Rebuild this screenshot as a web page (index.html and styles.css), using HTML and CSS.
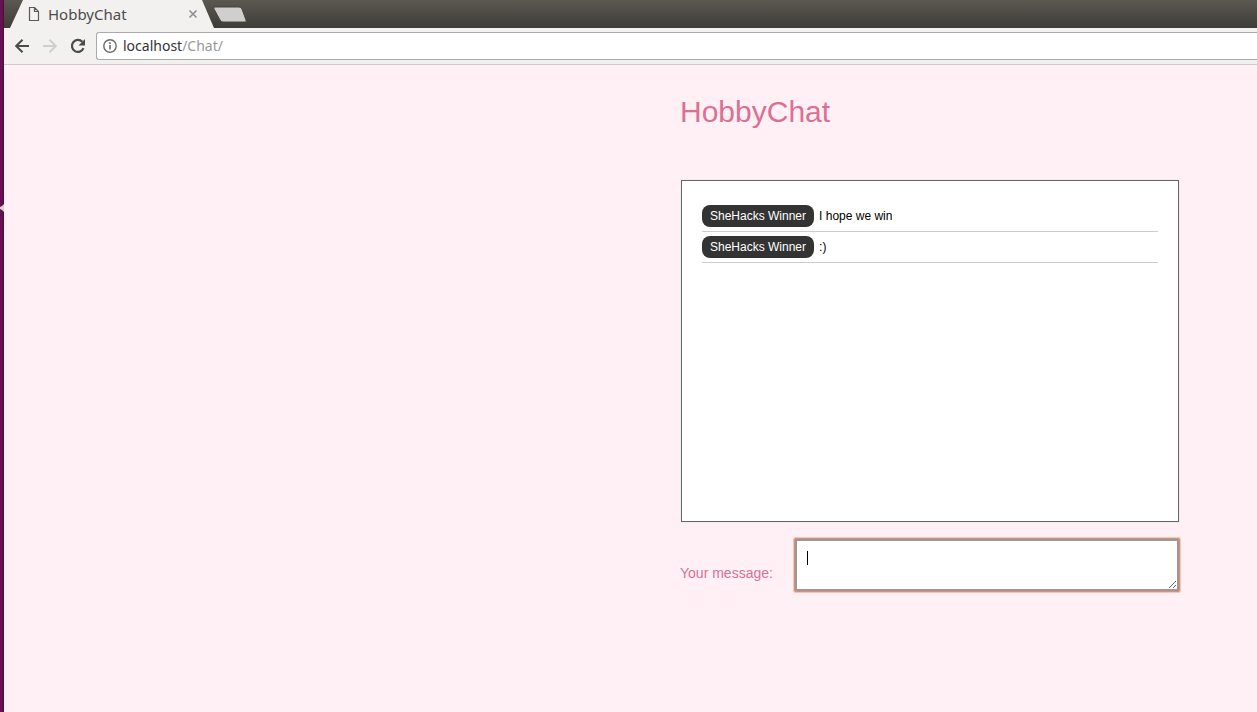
FILE: index.html
```html
<!DOCTYPE html>
<html lang="en">
<head>
<meta charset="utf-8">
<title>HobbyChat</title>
<link rel="stylesheet" href="styles.css">
</head>
<body>
<div class="desktop">
  <div class="launcher-edge">
    <svg class="launcher-arrow" width="4" height="8" viewBox="0 0 4 8" aria-hidden="true"><path d="M4 0v8L2 6 0 5V3l2-1z" fill="#d8d4d2"/></svg>
  </div>
  <div class="browser">
    <header class="tab-strip">
      <svg class="tab-shape" width="205" height="28" viewBox="0 0 205 28" aria-hidden="true"><path d="M0 28L13 0h179l12 28z" fill="#f2f1f0"/></svg>
      <div class="tab">
        <svg width="12" height="14" viewBox="0 0 12 14" aria-hidden="true"><path d="M1.500.5h5l4 4v9h-9zM6.500.5v4h4" fill="none" stroke="#5a5a5a" stroke-width="1.200"/></svg>
        <span class="tab-title">HobbyChat</span>
        <button class="tab-close" type="button" aria-label="Close tab"><svg width="10" height="10" viewBox="0 0 10 10"><path d="M1.500 1.500l7 7M8.500 1.500l-7 7" stroke="#8f8f8f" stroke-width="1.600"/></svg></button>
      </div>
      <button class="new-tab" type="button" aria-label="New tab"><svg width="34" height="17" viewBox="0 0 34 17"><path d="M2 1h24q2 0 3 2l4 11q1 2-1 2H10q-2 0-3-2L1 3q-1-2 1-2z" fill="#d0cfcd" stroke="#45443e"/></svg></button>
    </header>
    <nav class="toolbar" aria-label="Browser">
      <button type="button" aria-label="Back"><svg width="16" height="16" viewBox="0 0 16 16"><path d="M15 8H2.500M8.500 1.700L2.200 8l6.300 6.300" fill="none" stroke="#4b4b4b" stroke-width="2"/></svg></button>
      <button type="button" aria-label="Forward"><svg width="16" height="16" viewBox="0 0 16 16"><path d="M1 8h12.500M7.500 1.700L13.800 8l-6.300 6.300" fill="none" stroke="#cfcecd" stroke-width="2"/></svg></button>
      <button type="button" aria-label="Reload"><svg width="16" height="16" viewBox="0 0 16 16"><path d="M13.500 10.200A6 6 0 1 1 12.300 3.800" fill="none" stroke="#4b4b4b" stroke-width="2.200"/><path d="M15 1v6.500H8.500z" fill="#4b4b4b"/></svg></button>
      <div class="address">
        <svg width="14" height="14" viewBox="0 0 14 14" aria-hidden="true"><circle cx="7" cy="7" r="6.200" fill="none" stroke="#6b6b6b" stroke-width="1.400"/><path d="M7 6v4.500M7 3.300v1.600" stroke="#6b6b6b" stroke-width="1.600"/></svg>
        <span class="url">localhost<span class="url-path">/Chat/</span></span>
      </div>
    </nav>
    <main class="page">
      <div class="chat">
        <h1>HobbyChat</h1>
        <div class="chat-area">
          <p class="message"><span class="sender">SheHacks Winner</span>I hope we win</p>
          <p class="message"><span class="sender">SheHacks Winner</span>:)</p>
        </div>
        <form class="send-form">
          <label for="message">Your message:</label>
          <div class="field">
            <textarea id="message" maxlength="100"></textarea>
            <span class="caret"></span>
          </div>
        </form>
      </div>
    </main>
  </div>
</div>
</body>
</html>
```
FILE: styles.css
```css
* { box-sizing: border-box; }
body { margin: 0; font-family: "Liberation Sans", Arial, sans-serif; }
button { border: 0; padding: 0; background: none; display: flex; }
svg { display: block; flex: none; }
.desktop { display: flex; min-height: 100vh; }
.launcher-edge { width: 4px; flex: none; position: relative; background: #65104f; border-right: 1px solid #4b0f3e; }
.launcher-arrow { position: absolute; left: 0; top: 204px; }
.browser { flex: 1; min-width: 0; display: flex; flex-direction: column; }

.tab-strip { position: relative; display: flex; align-items: center; height: 28px; padding-left: 24px; background: linear-gradient(#5b5850, #3d3c37); overflow: hidden; }
.tab-shape { position: absolute; left: 6px; top: 0; }
.tab { position: relative; display: flex; align-items: center; width: 170px; }
.tab-title { flex: 1; padding-left: 8px; font: 15px/20px "Noto Sans", sans-serif; color: #4c4c4c; }
.new-tab { position: relative; margin-left: 15px; }

.toolbar { display: flex; align-items: center; gap: 12px; height: 37px; padding-left: 10px; background: #f2f1f0; border-bottom: 1px solid #cdcbcc; }
.address { flex: 1; display: flex; align-items: center; gap: 6px; height: 28px; margin-left: -2px; padding-left: 6px; background: #fff; border: 1px solid #aaa; border-right: 0; border-radius: 3px 0 0 3px; }
.url { font: 14px/20px "Noto Sans", sans-serif; color: #333; }
.url-path { color: #999; }

.page { flex: 1; display: flex; justify-content: flex-end; padding: 27px 77px 27px 20px; background: #fff0f5; }
.chat { width: 500px; color: #db7093; }
h1 { margin: 0; font-size: 30px; line-height: 40px; font-weight: 400; }
.chat-area { height: 342px; margin: 48px 1px 16px; padding: 20px; background: #fff; border: 1px solid #666; box-shadow: 0 0 0 1px #f4edf0; overflow: auto; }
.message { display: flex; align-items: center; gap: 5px; margin: 0; padding: 4px 0; border-bottom: 1px solid #ccc; font-size: 12px; line-height: 22px; color: #000; }
.sender { padding: 0 8px; border-radius: 8px; background: #333; color: #fff; }
.send-form { display: flex; align-items: center; justify-content: space-between; }
.send-form label { padding-top: 16px; font-size: 14px; line-height: 20px; }
.field { position: relative; display: flex; margin: 1px 1px 0 0; }
textarea { width: 384px; height: 52px; padding: 8px; border: 2px solid #999; border-radius: 1px; outline: 0; box-shadow: 0 0 0 1px #df8c74, 0 0 0 2px #f8c5b9; background: #fff; font: 14px/18px "Liberation Sans", Arial, sans-serif; resize: both; }
.caret { position: absolute; left: 12px; top: 12px; width: 1px; height: 14px; background: #000; }
```
